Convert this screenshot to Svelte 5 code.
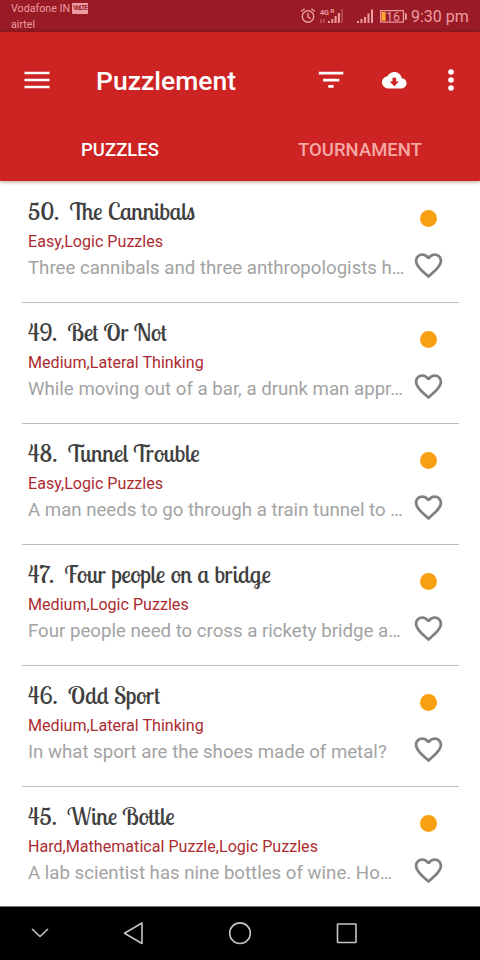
<script>
  let activeTab = $state("puzzles");

  const puzzles = [
    { number: 50, name: "The Cannibals", tags: "Easy,Logic Puzzles", excerpt: "Three cannibals and three anthropologists h…" },
    { number: 49, name: "Bet Or Not", tags: "Medium,Lateral Thinking", excerpt: "While moving out of a bar, a drunk man appr…" },
    { number: 48, name: "Tunnel Trouble", tags: "Easy,Logic Puzzles", excerpt: "A man needs to go through a train tunnel to …" },
    { number: 47, name: "Four people on a bridge", tags: "Medium,Logic Puzzles", excerpt: "Four people need to cross a rickety bridge a…" },
    { number: 46, name: "Odd Sport", tags: "Medium,Lateral Thinking", excerpt: "In what sport are the shoes made of metal?" },
    { number: 45, name: "Wine Bottle", tags: "Hard,Mathematical Puzzle,Logic Puzzles", excerpt: "A lab scientist has nine bottles of wine. Ho…" }
  ];
</script>

<div class="screen">
  <div class="statusBar">
    <div class="carriers">
      <div class="carrier">Vodafone IN<span class="volte">VoLTE</span></div>
      <div class="carrier">airtel</div>
    </div>
    <svg class="statusIcons" width="109" height="22" viewBox="0 0 109 22" fill="none" stroke="#ee9ca4">
      <circle cx="8" cy="11.5" r="5.7" stroke-width="1.4" />
      <path d="M8 8v4l2.8 1.5M1.3 6.5l3.3-2.8M14.7 6.5l-3.3-2.8" stroke-width="1.4" />
      <g fill="#ee9ca4" stroke="none">
        <text x="20" y="9.5" font-size="8" font-weight="700" textLength="9" lengthAdjust="spacingAndGlyphs">4G</text>
        <text x="30.5" y="7.5" font-size="6" font-weight="700">R</text>
        <path d="M28 16h2v2h-2zM31.3 14h2v4h-2zM34.6 11h2v7h-2zM37.9 8h2v10h-2z" />
        <path d="M41.2 4h1.8v14h-1.8zM20 14h2v4h-2zM23 14h2v4h-2z" opacity="0.35" />
        <path d="M57 16h2v2h-2zM60.5 14h2v4h-2zM64 12h2v6h-2zM67.5 8.5h2v9.5h-2zM71 4.5h2v13.5h-2z" />
      </g>
      <rect x="80.6" y="5.6" width="22.8" height="11.5" stroke-width="1.2" />
      <path d="M105.8 8.3v6.5" stroke-width="2" />
      <path d="M81.5 6.8h4.2v9h-4.2z" fill="#ffa42c" stroke="none" />
      <text x="86" y="15.7" font-size="12.5" fill="#ee9ca4" stroke="none">16</text>
    </svg>
    <div class="clock">9:30 pm</div>
  </div>

  <header class="header">
    <div class="toolbar">
      <button class="iconButton menu" aria-label="Menu">
        <svg width="26" height="18" viewBox="0 0 26 18" fill="#fff">
          <path d="M.5.7h25v2.6H.5zM.5 7.7h25v2.6H.5zM.5 14.7h25v2.6H.5z" />
        </svg>
      </button>
      <h1 class="appTitle">Puzzlement</h1>
      <button class="iconButton filter" aria-label="Filter">
        <svg width="26" height="18" viewBox="0 0 26 18" fill="#fff">
          <path d="M.8.8h24.5v2.8H.8zM5 7.7h16.300v2.800H5zM10.300 14h5.200v2.800h-5.200z" />
        </svg>
      </button>
      <button class="iconButton cloud" aria-label="Download">
        <svg width="24.6" height="24.6" viewBox="0 0 24 24" fill="#fff">
          <path d="M19.35 10.04C18.67 6.59 15.64 4 12 4 9.11 4 6.6 5.64 5.35 8.04 2.34 8.36 0 10.91 0 14c0 3.31 2.69 6 6 6h13c2.76 0 5-2.24 5-5 0-2.64-2.05-4.78-4.65-4.96zM16.5 13.2l-4.5 4.5-4.5-4.5h2.7V9.4h3.6v3.8z" />
        </svg>
      </button>
      <button class="iconButton more" aria-label="More options">
        <svg width="8" height="24" viewBox="0 0 8 24" fill="#fff">
          <circle cx="4" cy="4" r="2.8" />
          <circle cx="4" cy="12" r="2.8" />
          <circle cx="4" cy="20" r="2.8" />
        </svg>
      </button>
    </div>
    <div class="tabs">
      <button class="tab" class:active={activeTab === "puzzles"} onclick={() => (activeTab = "puzzles")}>PUZZLES</button>
      <button class="tab" class:active={activeTab === "tournament"} onclick={() => (activeTab = "tournament")}>TOURNAMENT</button>
    </div>
  </header>

  <main class="list">
    {#each puzzles as puzzle}
      <article class="puzzle">
        <div class="details">
          <h2 class="name">{`${puzzle.number}.  ${puzzle.name}`}</h2>
          <div class="tags">{puzzle.tags}</div>
          <div class="excerpt">{puzzle.excerpt}</div>
        </div>
        <div class="marks">
          <span class="dot"></span>
          <button class="iconButton" aria-label="Add to favourites">
            <svg width="33" height="33" viewBox="0 0 24 24" fill="#808080">
              <path d="M16.5 3c-1.74 0-3.41.81-4.5 2.09C10.91 3.81 9.24 3 7.5 3 4.42 3 2 5.42 2 8.5c0 3.78 3.4 6.86 8.55 11.54L12 21.35l1.45-1.32C18.6 15.36 22 12.28 22 8.5 22 5.42 19.58 3 16.5 3zm-4.4 15.55l-.1.1-.1-.1C7.14 14.24 4 11.39 4 8.5 4 6.5 5.5 5 7.5 5c1.54 0 3.04.99 3.57 2.36h1.87C13.46 5.99 14.96 5 16.5 5c2 0 3.5 1.5 3.5 3.5 0 2.89-3.14 5.74-7.9 10.05z" />
            </svg>
          </button>
        </div>
      </article>
    {/each}
  </main>

  <nav class="navBar">
    <svg width="480" height="53" viewBox="0 0 480 53" fill="none" stroke="#c4c4c4" stroke-width="1.6" stroke-linejoin="round">
      <path d="M32 22l8 7.5 8-7.5" />
      <path d="M142 16v20.500L124.500 26.200z" />
      <circle cx="240" cy="26.2" r="10.3" />
      <rect x="337.500" y="17" width="18.500" height="18.500" rx="0.500" />
    </svg>
  </nav>
</div>

<style>
  :global(body) {
    margin: 0;
    background: #fff;
  }

  .screen {
    display: flex;
    flex-direction: column;
    width: 480px;
    height: 960px;
    overflow: hidden;
    background: #fff;
    font-family: Roboto, sans-serif;
  }

  .statusBar {
    display: flex;
    flex-shrink: 0;
    height: 32px;
    box-sizing: border-box;
    padding: 1px 10px 0 11px;
    background: linear-gradient(#991b26 28px, #8b1a20);
    color: #ee9ca4;
  }

  .carriers {
    flex: 1;
  }

  .carrier {
    display: flex;
    align-items: center;
    gap: 2px;
    height: 15.5px;
    font-size: 10.7px;
    line-height: 15px;
    white-space: pre;
  }

  .volte {
    width: 16px;
    height: 11px;
    border-radius: 1px;
    background: #ee9ca4;
    color: #991b26;
    font-size: 6.5px;
    font-weight: 700;
    line-height: 11px;
    letter-spacing: -0.9px;
    text-align: center;
  }

  .statusIcons {
    margin-top: 4px;
  }

  .clock {
    width: 59px;
    margin-left: 2px;
    font-size: 16px;
    line-height: 31px;
    white-space: nowrap;
  }

  .header {
    position: relative;
    flex-shrink: 0;
    height: 149px;
    background: #cd2323;
    box-shadow: 0 1px 4px rgba(100, 0, 0, 0.4);
  }

  .toolbar {
    display: flex;
    align-items: center;
    height: 96px;
    padding: 0 25px 0 24px;
  }

  .iconButton {
    display: flex;
    padding: 0;
    border: none;
    background: none;
    cursor: pointer;
  }

  .appTitle {
    flex: 1;
    margin: 0 0 0 46px;
    color: #fff;
    font-size: 26.5px;
    font-weight: 500;
  }

  .filter {
    margin-right: 38px;
  }

  .cloud {
    margin-right: 40px;
  }

  .tabs {
    display: flex;
    height: 44px;
  }

  .tab {
    flex: 1;
    padding: 0;
    border: none;
    background: none;
    color: #f5a8a6;
    font-family: inherit;
    font-size: 18.5px;
    font-weight: 500;
    cursor: pointer;
  }

  .tab.active {
    color: #fff;
  }

  .list {
    flex: 1;
    min-height: 0;
    padding: 0 21px 0 22px;
    overflow: hidden;
  }

  .puzzle {
    display: flex;
    height: 121px;
    box-sizing: border-box;
    padding-left: 6px;
    border-bottom: 1px solid #bdbdbd;
  }

  .puzzle:first-child {
    height: 122px;
    padding-top: 1px;
  }

  .details {
    width: 381px;
    padding-top: 14px;
    white-space: nowrap;
  }

  .name {
    height: 31px;
    margin: 0;
    color: #404040;
    font-family: "Lobster Two", "Liberation Serif", serif;
    font-size: 24.15px;
    font-weight: 400;
    line-height: 30px;
    white-space: pre;
  }

  .tags {
    height: 28px;
    color: #ac2b31;
    font-size: 16.1px;
    line-height: 29px;
  }

  .excerpt {
    color: #a3a3a3;
    font-size: 18.65px;
    line-height: 26px;
  }

  .marks {
    display: flex;
    flex-direction: column;
    align-items: center;
    width: 39px;
    padding-top: 28px;
  }

  .dot {
    width: 17px;
    height: 17px;
    margin-bottom: 22px;
    border-radius: 50%;
    background: #f8a011;
  }

  .navBar {
    flex-shrink: 0;
    height: 53px;
    border-top: 1px solid #777;
    background: #000;
  }

  .navBar svg {
    display: block;
  }
</style>
